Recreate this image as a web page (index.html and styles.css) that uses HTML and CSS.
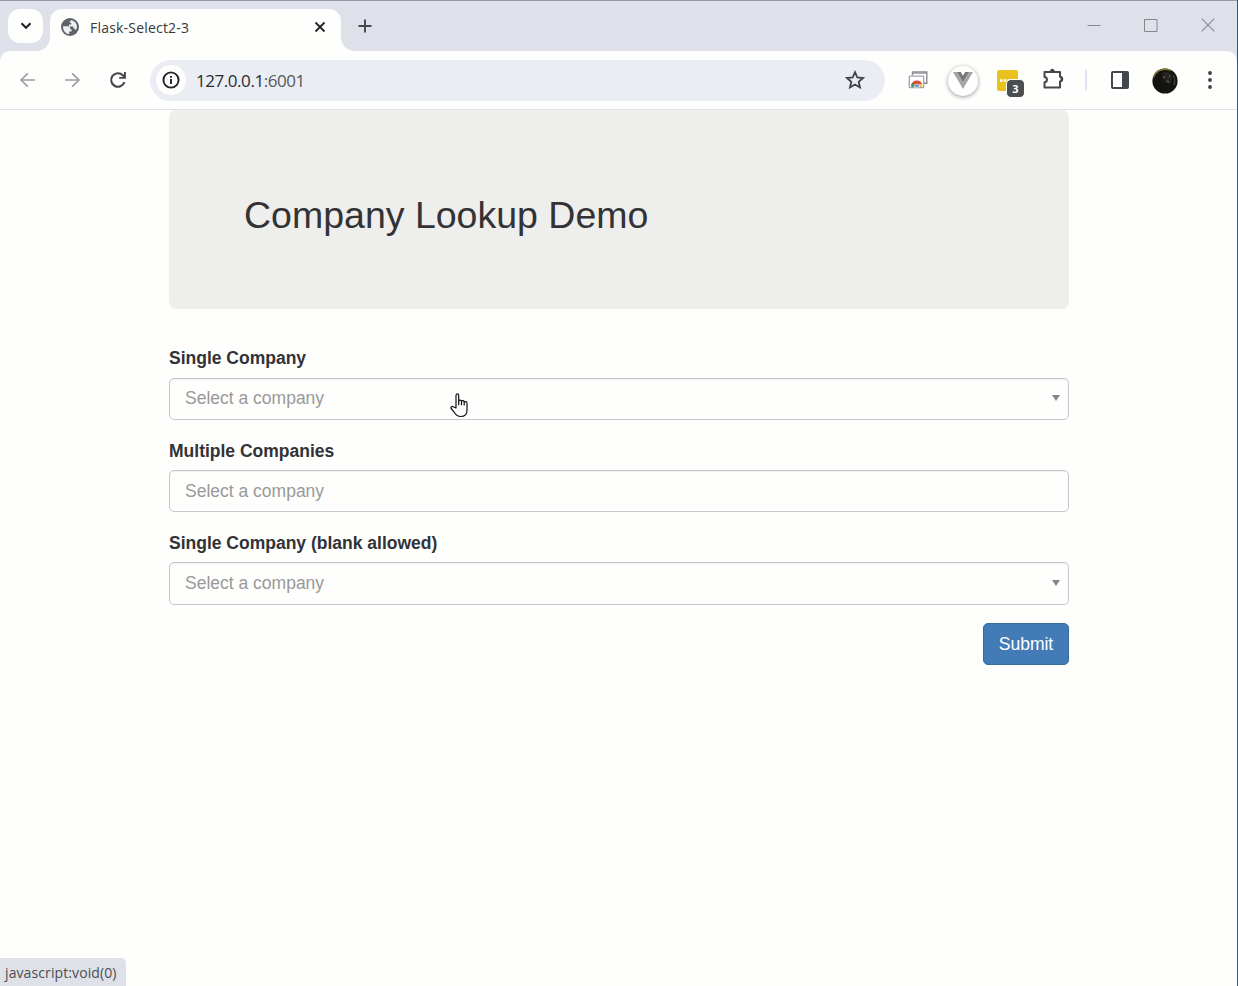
FILE: index.html
```
<!DOCTYPE html>
<html lang="en">
<head>
<meta charset="utf-8">
<title>Flask-Select2-3</title>
<link rel="stylesheet" href="styles.css">
</head>
<body>
<div class="window">
  <header class="tabstrip">
    <button class="tab-search" aria-label="Search tabs"><svg width="12" height="8" viewBox="0 0 12 8"><path d="M1.5 1.3 6 5.8l4.500-4.500" fill="none" stroke="#1f2023" stroke-width="2"/></svg></button>
    <div class="tab">
      <svg class="favicon" width="18" height="18" viewBox="0 0 18 18"><circle cx="9" cy="9" r="9" fill="#5f6368"/><path d="M2 8.200h5.200c1.300 0 2 .8 2 2v1h1.300v2.300H8.200v2.700C4.800 15.900 2 13 2 8.200zM10.300 2.200c3.300.6 5.500 3 5.700 6.300-.2 1.400-.5 2.500-1.200 3.600-.8-.8-1.200-1.500-2.400-1.500v-2H8V6.500h2.300V4.800H8.800V3.300z" fill="#eef0f2"/></svg>
      <span class="tab-title">Flask-Select2-3</span>
      <svg class="tab-close" width="12" height="12" viewBox="0 0 12 12"><path d="M1.500 1.500l9 9M10.500 1.500l-9 9" stroke="#1f2023" stroke-width="1.800"/></svg>
    </div>
    <button class="new-tab" aria-label="New tab"><svg width="14" height="14" viewBox="0 0 14 14"><path d="M7 .5v13M.5 7h13" stroke="#44474b" stroke-width="1.900"/></svg></button>
    <div class="controls">
      <svg width="14" height="14" viewBox="0 0 14 14"><path d="M.5 7.500h13" stroke="#898b90"/></svg>
      <svg width="14" height="14" viewBox="0 0 14 14"><path d="M.5 1.500h12.500V13.500H.5z" fill="none" stroke="#85878b"/></svg>
      <svg width="14" height="14" viewBox="0 0 14 14"><path d="M.7.7l12.600 12.600M13.300.7.700 13.300" stroke="#898b90" stroke-width="1.100"/></svg>
    </div>
  </header>

  <nav class="toolbar">
    <div class="cell"><svg width="16" height="16" viewBox="0 0 16 16"><path d="M15 8H1.500M7.800 1.300 1.100 8l6.700 6.700" fill="none" stroke="#9b9da0" stroke-width="1.700"/></svg></div>
    <div class="cell"><svg width="16" height="16" viewBox="0 0 16 16"><path d="M0 8H13.500M7.200 1.300 13.900 8l-6.700 6.700" fill="none" stroke="#9b9da0" stroke-width="1.700"/></svg></div>
    <div class="cell"><svg width="18" height="18" viewBox="0 0 18 18"><path d="M15.400 11.200A6.800 6.800 0 1 1 13.800 4.200L16 6.400" fill="none" stroke="#44474b" stroke-width="2.100"/><path d="M16.900 1v6.800h-6.700V5.900H15V1z" fill="#44474b"/></svg></div>
    <div class="address">
      <span class="site-info"><svg width="18" height="18" viewBox="0 0 18 18"><circle cx="9" cy="9" r="7.600" fill="none" stroke="#202124" stroke-width="1.900"/><path d="M9 8v5M9 5v1.800" stroke="#202124" stroke-width="1.900"/></svg></span>
      <span class="url">127.0.0.1<span class="port">:6001</span></span>
      <svg class="star" width="20" height="20" viewBox="0 0 20 20"><path d="M10 2.200l2.300 5.300 5.700.5-4.300 3.800 1.300 5.700-5-3-5 3 1.300-5.700L2 8l5.700-.5z" fill="none" stroke="#3f4246" stroke-width="1.800"/></svg>
    </div>
    <div class="extensions">
      <div class="cell"><svg width="20" height="20" viewBox="0 0 20 20"><path d="M4.500 5.500V2h14.300v11.300H16" fill="none" stroke="#8a8c90" stroke-width="1.400"/><path d="M5 3.200h13" stroke="#8a8c90"/><rect x="1.300" y="6.200" width="14.400" height="11.500" rx=".8" fill="#fff" stroke="#a0a3a8" stroke-width="1.300"/><path d="M3.200 15.500a5.700 5.700 0 0 1 11-1.200L9.500 15z" fill="#db4a3c"/><path d="M3.200 14.500l1.200-1.500 3 3v1.100H3.200z" fill="#3a9c5a"/><path d="M10.500 17l1.300-3.500 2.400 1V17z" fill="#f2c234"/><path d="M6 17a2.800 2.800 0 0 1 5.600 0z" fill="#4c82dd" stroke="#fff" stroke-width=".7"/></svg></div>
      <div class="cell"><span class="vue"><svg width="20" height="17" viewBox="0 0 20 17"><path d="M0 0h4l6 10.200L16 0h4L10 17z" fill="#a5a5a5"/><path d="M4 0h3.800L10 3.800 12.200 0H16l-6 10.200z" fill="#777"/></svg></span></div>
      <div class="cell"><span class="notes"><svg width="21" height="21" viewBox="0 0 21 21"><path d="M2 0h17q2 0 2 2v17H12v2H2q-2 0-2-2V2q0-2 2-2z" fill="#e9c222"/><path d="M3 10.500h15" stroke="#fff" stroke-width="2.400" stroke-dasharray="2.500 1.200"/></svg><b class="badge">3</b></span></div>
      <div class="cell"><svg class="puzzle" width="24" height="24" viewBox="0 0 24 24"><path d="M3.500 5H19v4.700c3 .2 3 4.600 0 4.800V20.500H3.500v-5.300c3.300-.4 3.300-4.700 0-5.100z" fill="none" stroke="#44474b" stroke-width="2" stroke-linejoin="round"/><path d="M9 4.500c0-3.600 4.700-3.600 4.700 0zM19.500 9.800c3.400 0 3.400 4.700 0 4.700z" fill="#44474b"/></svg></div>
      <div class="divider"></div>
      <div class="cell"><svg width="18" height="18" viewBox="0 0 18 18"><rect x="1" y="1" width="16" height="16" rx="1" fill="none" stroke="#44474b" stroke-width="2"/><path d="M11 1h6v16h-6z" fill="#44474b"/></svg></div>
      <div class="cell"><svg class="avatar" width="26" height="26" viewBox="0 0 26 26"><defs><clipPath id="avatar"><circle cx="13" cy="13" r="12.600"/></clipPath></defs><g clip-path="url(#avatar)"><path d="M0 0h26v26H0z" fill="#15130f"/><path d="M0 8V0h22l-3 3-6-1-5 1-4 3-2 4z" fill="#77752f"/><path d="M10 5q5-3 9 1l1 5-2 5-4-1-3-4z" fill="#252420"/><path d="M11 9l2 .5M17 8l1.500.5M15 13l2 1" stroke="#706b60" stroke-width="1.100"/><path d="M21 7q3 5 1 10" fill="none" stroke="#47423a" stroke-width="1.200"/></g></svg></div>
      <div class="cell"><svg width="4" height="18" viewBox="0 0 4 18"><g fill="#3c4043"><circle cx="2" cy="2" r="1.900"/><circle cx="2" cy="9" r="1.900"/><circle cx="2" cy="16" r="1.900"/></g></svg></div>
    </div>
  </nav>

  <main class="page">
    <div class="container">
      <section class="jumbotron"><h2>Company Lookup Demo</h2></section>
      <form>
        <div class="group">
          <label>Single Company</label>
          <div class="select"><span>Select a company</span><i class="arrow"></i></div>
        </div>
        <div class="group lower">
          <label>Multiple Companies</label>
          <div class="select"><span>Select a company</span></div>
        </div>
        <div class="group lower">
          <label>Single Company (blank allowed)</label>
          <div class="select tall"><span>Select a company</span><i class="arrow"></i></div>
        </div>
        <div class="actions"><button class="submit" type="button">Submit</button></div>
      </form>
    </div>
  </main>
  <div class="status">javascript:void(0)</div>
  <svg class="cursor" width="18" height="25" viewBox="0 0 18 25"><path d="M6 15V2.500C6 .4 8.700.4 8.700 2.500V8c.2-1.300 2.600-1.200 2.800.3.400-1 2.500-.8 2.700.7.500-.8 2.800-.5 2.800 1.200v7c0 4-2.500 6.300-6.200 6.300-3.500 0-5-1.500-6.500-4.200L1.200 15.500c-.8-1.500.8-2.600 2.100-1.700z" fill="#fff" stroke="#111" stroke-width="1.200" stroke-linejoin="round"/><path d="M8.700 7.500v4.700M11.500 8.300v4M14.200 9v3.500" stroke="#111" stroke-width="1.200"/></svg>
</div>
</body>
</html>
```
FILE: styles.css
```
* { box-sizing: border-box; }
body { margin: 0; font-family: "Liberation Sans", Arial, sans-serif; font-size: 17.5px; color: #333; }
button { border: 0; padding: 0; font: inherit; }
svg { display: block; flex: none; }
.window { position: relative; display: flex; flex-direction: column; height: 986px; overflow: hidden; background: #fefefd; border-right: 1px solid #345b73; }

.tabstrip { display: flex; height: 61px; margin-bottom: -10px; flex: none; background: #dee1ea; border-top: 1px solid #999ca7; padding: 8px 0 0 8px; }
.tab-search { display: flex; align-items: center; justify-content: center; width: 35px; height: 34px; border-radius: 12px; background: #fefefd; }
.tab { position: relative; display: flex; align-items: center; width: 291px; height: 42px; margin-left: 7px; padding: 0 15px 7px 11px; border-radius: 12px 12px 0 0; background: #fefefd; font-family: "Open Sans", "Noto Sans", sans-serif; font-size: 14px; letter-spacing: .2px; color: #36373a; }
.tab::before, .tab::after { content: ""; position: absolute; bottom: 0; width: 13px; height: 13px; }
.tab::before { left: -13px; background: radial-gradient(circle at 0 0, transparent 12.500px, #fefefd 13px); }
.tab::after { right: -13px; background: radial-gradient(circle at 100% 0, transparent 12.500px, #fefefd 13px); }
.tab-title { flex: 1; margin-left: 11px; padding-top: 1px; }
.new-tab { display: flex; align-items: center; justify-content: center; width: 35px; height: 34px; margin-left: 6px; background: none; }
.controls { display: flex; margin-left: auto; gap: 43px; padding: 9px 22px 0 0; }

.toolbar { position: relative; display: flex; align-items: center; flex: none; height: 59px; padding: 0 5px; background: #fefefd; border-bottom: 1px solid #dfe0e2; border-radius: 10px 10px 0 0; }
.cell { display: flex; align-items: center; justify-content: center; width: 45px; height: 45px; flex: none; }
.address { display: flex; align-items: center; width: 735px; height: 41px; margin-left: 10px; padding: 0 20px 0 6px; border-radius: 21px; background: #ebedf5; flex: none; }
.site-info { display: flex; align-items: center; justify-content: center; width: 30px; height: 30px; border-radius: 50%; background: #fefefd; }
.url { flex: 1; margin-left: 10px; font-family: "Open Sans", "Noto Sans", sans-serif; font-size: 17px; letter-spacing: -.45px; color: #292b2e; }
.port { color: #55585c; }
.extensions { display: flex; align-items: center; margin-left: 10px; }
.vue { display: flex; align-items: flex-start; justify-content: center; width: 30px; height: 30px; padding-top: 6px; margin-top: 1px; border-radius: 50%; background: #fefefd; box-shadow: 0 1px 4px #999; }
.notes { position: relative; }
.badge { position: absolute; left: 9px; top: 9px; width: 19px; height: 19px; border: 1px solid #fefefd; border-radius: 5px; background: #4b4d4e; color: #fff; font: bold 11px/17px "Open Sans", sans-serif; text-align: center; }
.puzzle { margin-top: -2px; }
.avatar { margin-top: 1px; }
.divider { width: 2px; height: 20px; margin: 0 10px; background: #dfe3f8; }

.page { flex: 1; }
.container { width: 900px; margin-left: 169px; }
.jumbotron { height: 199px; padding: 80px 75px 0; border-radius: 7px; background: #eeeeed; }
.jumbotron h2 { margin: 0; font-size: 37.500px; font-weight: 500; line-height: 50px; color: #333336; }
form { padding-top: 37px; }
.group { display: flex; flex-direction: column; margin-bottom: 18px; }
.group label { font-weight: bold; line-height: 25px; margin-bottom: 7px; color: #313336; }
.lower label { padding-top: 1px; margin-bottom: 6px; }
.select { display: flex; align-items: center; justify-content: space-between; height: 42px; padding: 0 8px 2px 15px; border: 1px solid #c7c8cc; border-radius: 5px; color: #999; box-shadow: inset 0 1px 1px #f1f1f1; }
.lower .select { padding-bottom: 0; }
.lower .arrow { margin-bottom: 1px; }
.tall { height: 43px; }
.arrow { border: 4px solid transparent; border-top: 6px solid #85878a; border-bottom: 0; }
.actions { display: flex; justify-content: flex-end; }
.submit { width: 86px; height: 42px; border: 1px solid #376b9e; border-radius: 5px; background: #437bb7; color: #fff; }
.status { position: absolute; left: 0; bottom: 0; width: 126px; height: 28px; padding-left: 5px; border-radius: 0 5px 0 0; background: #dee1e7; color: #4c4e52; font: 14px/29px "Open Sans", sans-serif; letter-spacing: .1px; }
.cursor { position: absolute; left: 450px; top: 393px; }
```
